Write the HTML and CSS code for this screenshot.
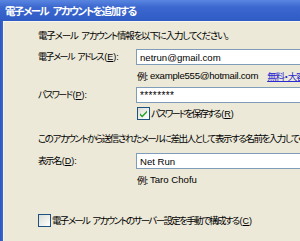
FILE: index.html
```html
<!DOCTYPE html>
<html lang="ja">
<head>
<meta charset="utf-8">
<link rel="stylesheet" href="styles.css">
</head>
<body>
<div class="window">
  <div class="titlebar">電子メール アカウントを追加する</div>
  <div class="frame">
    <div class="edge"></div>
    <div class="panel">
      <div class="intro">電子メール アカウント情報を以下に入力してください。</div>
      <div class="row row-email">
        <div class="label">電子メール アドレス<span class="key">(<u>E</u>):</span></div>
        <div class="field"><span class="latin">netrun@gmail.com</span></div>
      </div>
      <div class="hint"><span>例:</span><span class="latin ex">example555@hotmail.com</span><a class="link">無料・大容量</a></div>
      <div class="row row-pass">
        <div class="label">パスワード<span class="key">(<u>P</u>):</span></div>
        <div class="field"><span class="latin stars">********</span></div>
      </div>
      <div class="check check-save">
        <span class="box checked"><svg viewBox="0 0 13 13" width="13" height="13"><path d="M3 6.2 L5.2 8.5 L10 3.6 L10 5.6 L5.2 10.4 L3 8.2 Z" fill="#21a121"/></svg></span>
        <span class="ctext">パスワードを保存する<span class="key">(<u>R</u>)</span></span>
      </div>
      <div class="desc">このアカウントから送信されたメールに差出人として表示する名前を入力してください。</div>
      <div class="row row-name">
        <div class="label">表示名<span class="key">(<u>D</u>):</span></div>
        <div class="field"><span class="latin">Net Run</span></div>
      </div>
      <div class="hint"><span>例:</span><span class="latin">Taro Chofu</span></div>
      <div class="check check-manual">
        <span class="box"></span>
        <span class="ctext">電子メール アカウントのサーバー設定を手動で構成する<span class="key">(<u>C</u>)</span></span>
      </div>
    </div>
  </div>
</div>
</body>
</html>
```
FILE: styles.css
```css
* { box-sizing: border-box; }
html, body { margin: 0; padding: 0; }
body {
  width: 300px;
  height: 241px;
  overflow: hidden;
  background: #ece9d8;
}
.window {
  width: 300px;
  height: 241px;
  overflow: hidden;
  display: flex;
  flex-direction: column;
  font-family: "Noto Sans CJK JP", sans-serif;
  font-feature-settings: "palt";
  font-size: 9.5px;
  letter-spacing: -1.1px;
  word-spacing: 2.5px;
  color: #000;
}
.titlebar {
  height: 21px;
  flex: none;
  background: linear-gradient(#5a86e0 0%, #3b67cf 35%, #2f5bc4 100%);
  color: #fff;
  font-weight: bold;
  font-size: 10.5px;
  letter-spacing: -1.5px;
  word-spacing: 3.5px;
  line-height: 21px;
  padding-left: 5px;
  white-space: nowrap;
}
.frame {
  flex: 1;
  display: flex;
}
.edge {
  width: 3px;
  flex: none;
  background: linear-gradient(90deg, #2b55c0, #3e68cc);
}
.panel {
  flex: 1;
  background: #ece9d8;
  border-left: 1px solid #f7f5ec;
  border-top: 1px solid #f7f5ec;
  padding: 6px 0 0 34px;
  white-space: nowrap;
  min-width: 0;
}
.intro, .desc, .hint, .check, .label {
  line-height: 14px;
  height: 14px;
}
.intro { letter-spacing: -1.2px; }
.row {
  display: flex;
  align-items: center;
  height: 16px;
}
.row-email { margin-top: 7px; }
.row-pass { margin-top: 4px; }
.row-name { margin-top: 8px; }
.label {
  width: 98px;
  flex: none;
  font-size: 9px;
  letter-spacing: -1.4px;
}
.key {
  font-family: "Liberation Sans", sans-serif;
  font-size: 9px;
  letter-spacing: 0;
  margin-left: 1px;
}
.field {
  width: 200px;
  flex: none;
  height: 16px;
  background: #fff;
  border: 1px solid #7f9db9;
  padding-left: 3px;
  line-height: 14px;
}
.latin {
  font-family: "Liberation Sans", sans-serif;
  font-size: 9.6px;
  letter-spacing: 0;
  word-spacing: 0;
}
.latin.ex { letter-spacing: -0.25px; }
.stars { font-size: 10px; letter-spacing: 0.4px; }
.hint {
  margin-top: 4px;
  padding-left: 99px;
  display: flex;
  gap: 3px;
}
.link {
  margin-left: 6px;
  color: #2b2bd0;
  text-decoration: underline;
}
.check {
  display: flex;
  align-items: center;
  gap: 1px;
}
.check-save { margin-top: 3px; padding-left: 99px; }
.check-save .ctext { letter-spacing: -1.85px; }
.check-manual .ctext { letter-spacing: -1.65px; }
.desc { margin-top: 11px; letter-spacing: -1.45px; }
.check-manual { margin-top: 26px; }
.box {
  width: 13px;
  height: 13px;
  flex: none;
  border: 1px solid #1c5180;
  background: linear-gradient(135deg, #dcdcd6, #ffffff);
  position: relative;
  display: block;
}
.box svg {
  position: absolute;
  left: -1px;
  top: -1px;
}
u { text-decoration: underline; }
```
